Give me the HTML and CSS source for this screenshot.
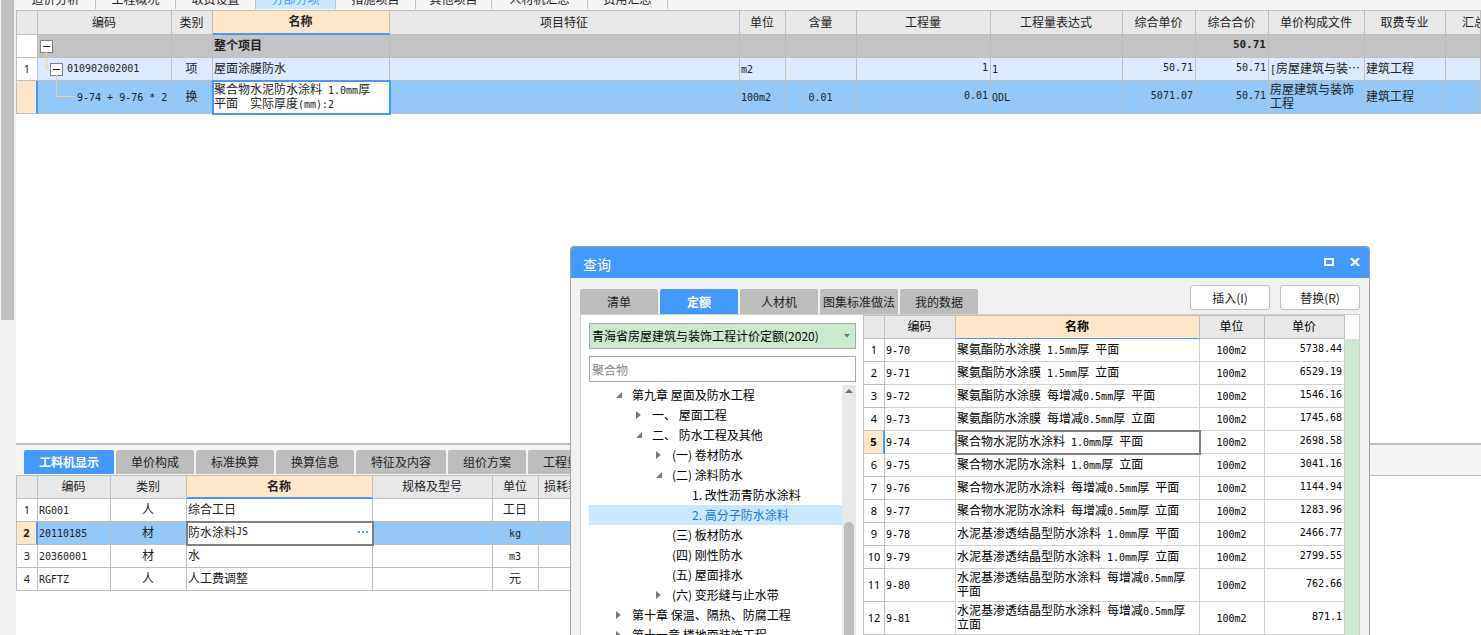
FILE: index.html
```html
<!DOCTYPE html>
<html lang="zh-CN">
<head>
<meta charset="utf-8">
<title>分部分项</title>
<link rel="stylesheet" href="styles.css">
</head>
<body>
<div class="app">
  <aside class="rail"><div class="rail-thumb"></div></aside>
  <main class="main">
    <nav class="page-tabs">
      <button>造价分析</button><button>工程概况</button><button>取费设置</button><button class="active">分部分项</button><button>措施项目</button><button class="narrow">其他项目</button><button class="wide">人材机汇总</button><button>费用汇总</button>
    </nav>
    <section class="bill">
      <table class="grid">
        <colgroup><col class="w22"><col class="w134"><col class="w41"><col class="w177"><col><col class="w46"><col class="w71"><col class="w134"><col class="w132"><col class="w73"><col class="w73"><col class="w96"><col class="w81"><col class="w35"></colgroup>
        <thead>
          <tr class="bill-head"><th></th><th>编码</th><th>类别</th><th class="current">名称</th><th>项目特征</th><th>单位</th><th>含量</th><th>工程量</th><th>工程量表达式</th><th>综合单价</th><th>综合合价</th><th>单价构成文件</th><th>取费专业</th><th class="cut">汇总类别</th></tr>
        </thead>
        <tbody>
          <tr class="total"><td class="idx"></td><td class="code"><button class="toggle" aria-label="折叠"></button></td><td></td><td class="strong">整个项目</td><td></td><td></td><td></td><td></td><td></td><td></td><td class="num strong">50.71</td><td></td><td></td><td></td></tr>
          <tr class="item"><td class="idx">1</td><td class="code lv1"><span class="branch"></span><button class="toggle" aria-label="折叠"></button><span class="n">010902002001</span></td><td class="mid">项</td><td>屋面涂膜防水</td><td></td><td><span class="n">m2</span></td><td></td><td class="num">1</td><td><span class="n">1</span></td><td class="num">50.71</td><td class="num">50.71</td><td class="file"><span class="n">[</span>房屋建筑与装…</td><td>建筑工程</td><td></td></tr>
          <tr class="tall picked"><td class="idx on"></td><td class="code lv2"><span class="branch"></span><span class="n">9-74 + 9-76 * 2</span></td><td class="mid">换</td><td class="edit">聚合物水泥防水涂料<span class="n"> 1.0mm</span>厚<br>平面　实际厚度<span class="n">(mm):2</span></td><td></td><td><span class="n">100m2</span></td><td class="mid"><span class="n">0.01</span></td><td class="num">0.01</td><td><span class="n">QDL</span></td><td class="num">5071.07</td><td class="num">50.71</td><td>房屋建筑与装饰工程</td><td>建筑工程</td><td></td></tr>
        </tbody>
      </table>
    </section>
    <section class="detail">
      <nav class="tabs detail-tabs">
        <button class="active long">工料机显示</button><button>单价构成</button><button>标准换算</button><button>换算信息</button><button class="long">特征及内容</button><button>组价方案</button><button class="long">工程量明细</button>
      </nav>
      <div class="detail-body">
        <table class="grid res">
          <colgroup><col class="w22"><col class="w73"><col class="w76"><col class="w186"><col class="w120"><col class="w46"><col class="w46"></colgroup>
          <thead><tr><th></th><th>编码</th><th>类别</th><th class="current">名称</th><th>规格及型号</th><th>单位</th><th class="cut5">损耗率</th></tr></thead>
          <tbody>
            <tr><td class="idx">1</td><td><span class="n">RG001</span></td><td class="mid">人</td><td>综合工日</td><td></td><td class="mid">工日</td><td></td></tr>
            <tr class="picked"><td class="idx on">2</td><td><span class="n">20110185</span></td><td class="mid">材</td><td class="focus"><div class="with-more">防水涂料<span class="n">JS</span><button class="more" aria-label="更多"><i></i><i></i><i></i></button></div></td><td></td><td class="mid"><span class="n">kg</span></td><td></td></tr>
            <tr><td class="idx">3</td><td><span class="n">20360001</span></td><td class="mid">材</td><td>水</td><td></td><td class="mid"><span class="n">m3</span></td><td></td></tr>
            <tr><td class="idx">4</td><td><span class="n">RGFTZ</span></td><td class="mid">人</td><td>人工费调整</td><td></td><td class="mid">元</td><td></td></tr>
          </tbody>
        </table>
      </div>
    </section>
  </main>
</div>

<div class="dialog" role="dialog" aria-labelledby="dlg-title">
  <header class="titlebar">
    <h1 id="dlg-title">查询</h1>
    <button aria-label="最大化"><svg width="10" height="8" viewBox="0 0 10 8"><path d="M1 1h8v6H1z" fill="none" stroke="#fff" stroke-width="2"/></svg></button>
    <button aria-label="关闭"><svg width="10" height="8" viewBox="0 0 10 8"><path d="M1 0l8 8M9 0L1 8" stroke="#fff" stroke-width="2.4"/></svg></button>
  </header>
  <div class="toolbar">
    <nav class="tabs">
      <button>清单</button><button class="active">定额</button><button>人材机</button><button>图集标准做法</button><button>我的数据</button>
    </nav>
    <div class="actions"><button>插入(I)</button><button>替换(R)</button></div>
  </div>
  <div class="panes">
    <div class="finder">
      <div class="combo">
        <select aria-label="定额库"><option>青海省房屋建筑与装饰工程计价定额(2020)</option></select>
        <svg width="6" height="4" viewBox="0 0 6 4"><path d="M0 0h6L3 3.5z" fill="#777"/></svg>
      </div>
      <input class="search" type="text" placeholder="聚合物" aria-label="搜索">
      <div class="tree-wrap">
        <ul class="tree">
          <li class="open">第九章 屋面及防水工程</li>
          <li class="d1 closed">一、 屋面工程</li>
          <li class="d1 open">二、 防水工程及其他</li>
          <li class="d2 closed">(一) 卷材防水</li>
          <li class="d2 open">(二) 涂料防水</li>
          <li class="d3">1. 改性沥青防水涂料</li>
          <li class="d3 sel">2. 高分子防水涂料</li>
          <li class="d2">(三) 板材防水</li>
          <li class="d2">(四) 刚性防水</li>
          <li class="d2">(五) 屋面排水</li>
          <li class="d2 closed">(六) 变形缝与止水带</li>
          <li class="closed">第十章 保温、隔热、防腐工程</li>
          <li class="closed">第十一章 楼地面装饰工程</li>
        </ul>
        <div class="scroll"><svg width="8" height="4" viewBox="0 0 8 4"><path d="M4 0l4 4H0z" fill="#707078"/></svg><div class="scroll-thumb"></div></div>
      </div>
    </div>
    <div class="quota">
      <table class="grid light">
        <colgroup><col class="w22"><col class="w71"><col><col class="w65"><col class="w80"></colgroup>
        <thead><tr><th></th><th>编码</th><th class="current thin">名称</th><th>单位</th><th>单价</th></tr></thead>
        <tbody>
          <tr><td class="idx">1</td><td><span class="n">9-70</span></td><td>聚氨酯防水涂膜<span class="n"> 1.5mm</span>厚<span class="n"> </span>平面</td><td class="mid"><span class="n">100m2</span></td><td class="num">5738.44</td></tr>
          <tr><td class="idx">2</td><td><span class="n">9-71</span></td><td>聚氨酯防水涂膜<span class="n"> 1.5mm</span>厚<span class="n"> </span>立面</td><td class="mid"><span class="n">100m2</span></td><td class="num">6529.19</td></tr>
          <tr><td class="idx">3</td><td><span class="n">9-72</span></td><td>聚氨酯防水涂膜<span class="n"> </span>每增减<span class="n">0.5mm</span>厚<span class="n"> </span>平面</td><td class="mid"><span class="n">100m2</span></td><td class="num">1546.16</td></tr>
          <tr><td class="idx">4</td><td><span class="n">9-73</span></td><td>聚氨酯防水涂膜<span class="n"> </span>每增减<span class="n">0.5mm</span>厚<span class="n"> </span>立面</td><td class="mid"><span class="n">100m2</span></td><td class="num">1745.68</td></tr>
          <tr><td class="idx on">5</td><td><span class="n">9-74</span></td><td class="focus">聚合物水泥防水涂料<span class="n"> 1.0mm</span>厚<span class="n"> </span>平面</td><td class="mid"><span class="n">100m2</span></td><td class="num">2698.58</td></tr>
          <tr><td class="idx">6</td><td><span class="n">9-75</span></td><td>聚合物水泥防水涂料<span class="n"> 1.0mm</span>厚<span class="n"> </span>立面</td><td class="mid"><span class="n">100m2</span></td><td class="num">3041.16</td></tr>
          <tr><td class="idx">7</td><td><span class="n">9-76</span></td><td>聚合物水泥防水涂料<span class="n"> </span>每增减<span class="n">0.5mm</span>厚<span class="n"> </span>平面</td><td class="mid"><span class="n">100m2</span></td><td class="num">1144.94</td></tr>
          <tr><td class="idx">8</td><td><span class="n">9-77</span></td><td>聚合物水泥防水涂料<span class="n"> </span>每增减<span class="n">0.5mm</span>厚<span class="n"> </span>立面</td><td class="mid"><span class="n">100m2</span></td><td class="num">1283.96</td></tr>
          <tr><td class="idx">9</td><td><span class="n">9-78</span></td><td>水泥基渗透结晶型防水涂料<span class="n"> 1.0mm</span>厚<span class="n"> </span>平面</td><td class="mid"><span class="n">100m2</span></td><td class="num">2466.77</td></tr>
          <tr><td class="idx">10</td><td><span class="n">9-79</span></td><td>水泥基渗透结晶型防水涂料<span class="n"> 1.0mm</span>厚<span class="n"> </span>立面</td><td class="mid"><span class="n">100m2</span></td><td class="num">2799.55</td></tr>
          <tr class="tall"><td class="idx">11</td><td><span class="n">9-80</span></td><td>水泥基渗透结晶型防水涂料<span class="n"> </span>每增减<span class="n">0.5mm</span>厚<br>平面</td><td class="mid"><span class="n">100m2</span></td><td class="num">762.66</td></tr>
          <tr class="tall"><td class="idx">12</td><td><span class="n">9-81</span></td><td>水泥基渗透结晶型防水涂料<span class="n"> </span>每增减<span class="n">0.5mm</span>厚<br>立面</td><td class="mid"><span class="n">100m2</span></td><td class="num">871.1</td></tr>
        </tbody>
      </table>
      <div class="gutter"></div>
    </div>
  </div>
</div>
</body>
</html>
```
FILE: styles.css
```css
* { box-sizing: border-box; }

body {
  margin: 0;
  height: 100vh;
  overflow: hidden;
  position: relative;
  background: #fff;
  color: #222;
  font: 12px/14px "Noto Sans CJK SC", sans-serif;
}

button, select, input { font: inherit; color: inherit; }
button { margin: 0; padding: 0; border: 0; background: none; white-space: nowrap; }

.app { display: flex; height: 100%; }

.rail { width: 16px; flex: none; padding: 0 2px 0 1px; background: #f0f0f0; }
.rail-thumb { height: 320px; background: #c0c0c0; }

.main { flex: 1; min-width: 0; display: flex; flex-direction: column; }

/* page tabs, scrolled mostly out of view */
.page-tabs {
  flex: none;
  display: flex;
  align-items: flex-end;
  height: 10px;
  padding-bottom: 1px;
  overflow: hidden;
  background: #f5f5f5;
}
.page-tabs button {
  flex: none;
  width: 80px;
  height: 20px;
  border-right: 1px solid #c0c0c0;
}
.page-tabs .narrow { width: 76px; }
.page-tabs .wide { width: 96px; }
.page-tabs .active { background: #cce8ff; color: #49f; }

/* grids */
.grid {
  width: 100%;
  table-layout: fixed;
  border-collapse: separate;
  border-spacing: 0;
  border-top: 1px solid #bfbfbf;
}
.grid th, .grid td {
  height: 23px;
  padding: 0 2px 2px 1px;
  border-right: 1px solid #bfbfbf;
  border-bottom: 1px solid #bfbfbf;
  text-align: left;
  vertical-align: middle;
  font-weight: normal;
}
.grid th { background: #e8e8e8; text-align: center; white-space: nowrap; overflow: hidden; }
.grid th:first-child, .grid td:first-child { border-left: 1px solid #bfbfbf; }
.grid th.current { background: #ffe6c8; font-weight: bold; border-bottom: 2px solid #49f; }
.grid th.thin { border-bottom-width: 1px; }
.grid .bill-head th { height: 24px; }
.grid .tall td { height: 33px; }
.grid th.cut { padding-left: 16px; text-align: left; }
.grid th.cut5 { padding-left: 5px; text-align: left; }
.grid .mid { text-align: center; }
.grid td.idx { padding: 0; text-align: center; font-family: "Noto Sans", sans-serif; font-size: 11px; background: #fff; }
.grid td.idx.on { background: #ffe6c8; border-right: 2px solid #49f; font-weight: bold; }
.n, .grid td.num { font-family: "DejaVu Sans Mono", monospace; font-size: 10px; white-space: pre; }
.n { line-height: 1; }
.grid td.num { text-align: right; }
.grid td.strong { font-weight: bold; }
.grid td.num.strong { font-size: 11px; }
.grid .total td { background: #c4c4c4; border-right-color: #bbb; }
.grid .total td.idx { background: #fff; border-right-color: #bfbfbf; }
.grid .item td { background: #dde9ff; }
.grid .item td.idx { background: #fff; }
.grid .picked td { background: #93c8f8; }
.grid .picked td.idx { background: #ffe6c8; }
.grid td.file { white-space: nowrap; overflow: hidden; }
.grid .picked td.edit { background: #fff; outline: 2px solid #49f; outline-offset: -1px; }
.grid td.focus, .grid .picked td.focus { background: #fff; outline: 2px solid #808080; outline-offset: -1px; }
.light { color: #000; }
.light td { border-color: #d0d0d0; }
.grid.light td.idx { border-color: #bfbfbf; }
.grid.light td.idx.on { border-right-color: #49f; }

.w22 { width: 22px; }
.w35 { width: 35px; }
.w41 { width: 41px; }
.w46 { width: 46px; }
.w65 { width: 65px; }
.w71 { width: 71px; }
.w73 { width: 73px; }
.w76 { width: 76px; }
.w80 { width: 80px; }
.w81 { width: 81px; }
.w96 { width: 96px; }
.w120 { width: 120px; }
.w132 { width: 132px; }
.w134 { width: 134px; }
.w177 { width: 177px; }
.w186 { width: 186px; }

/* code column hierarchy */
.grid td.code { position: relative; white-space: nowrap; }
.toggle {
  width: 13px;
  height: 13px;
  margin: 0 4px 0 1px;
  display: inline-flex;
  align-items: center;
  justify-content: center;
  vertical-align: middle;
  border: 1px solid #808080;
  background: #fff;
}
.toggle::before { content: ""; width: 7px; height: 1px; background: #222; }
.grid td.lv1 { padding-left: 11px; }
.grid td.lv2 { padding-left: 39px; }
.branch { position: absolute; border: solid #fc8; border-width: 0 0 1px 1px; }
.lv1 .branch { left: 8px; top: -6px; width: 5px; height: 17px; }
.lv2 .branch { left: 18px; top: -6px; width: 18px; height: 22px; }

.bill { flex: 1; min-height: 0; overflow: hidden; }

/* detail panel */
.detail {
  flex: none;
  height: 192px;
  display: flex;
  flex-direction: column;
  border-top: 2px solid #bfbfbf;
  background: #f4f4f4;
}
.detail-tabs { padding: 5px 0 0 8px; }
.detail-body { flex: 1; margin-top: 1px; border-top: 1px solid #bfbfbf; background: #fff; }
.grid.res { width: 569px; border-top: 0; }

.tabs { display: flex; gap: 2px; }
.tabs button {
  flex: none;
  width: 78px;
  height: 24px;
  border-radius: 2px 2px 0 0;
  background: #bdbdbd;
  color: #222;
}
.tabs button.long { width: 90px; }
.tabs button.active { background: #49f; color: #fff; font-weight: bold; }

.with-more { display: flex; align-items: center; }
.more { display: flex; gap: 2px; margin-left: auto; padding: 6px 2px; }
.more i { width: 2px; height: 2px; background: #48a0d8; }

/* query window */
.dialog {
  position: absolute;
  left: 570px;
  top: 246px;
  bottom: 0;
  width: 800px;
  display: flex;
  flex-direction: column;
  overflow: hidden;
  border: 1px solid #a0a0a0;
  border-bottom: 0;
  border-radius: 4px 4px 0 0;
  background: #f1f1f1;
}
.titlebar {
  flex: none;
  display: flex;
  align-items: center;
  gap: 16px;
  height: 31px;
  padding: 0 9px 1px 12px;
  background: #49f;
  color: #fff;
}
.titlebar h1 { flex: 1; margin: 0; padding-top: 3px; font-size: 14px; line-height: 20px; font-weight: normal; }
.titlebar button { display: flex; }

.toolbar {
  flex: none;
  display: flex;
  justify-content: space-between;
  height: 36px;
  padding: 7px 9px 0;
}
.toolbar .tabs { padding-top: 4px; }
.toolbar .tabs button { height: 25px; }
.actions { display: flex; gap: 10px; }
.actions button {
  width: 80px;
  height: 25px;
  border: 1px solid #bfbfbf;
  border-radius: 3px;
  background: #fff;
}

.panes {
  flex: 1;
  min-height: 0;
  margin: 0 9px;
  display: flex;
  border: 1px solid #d0d0d0;
  border-bottom: 0;
  background: #fff;
  color: #000;
}
.finder { width: 282px; flex: none; padding: 8px 7px 0 8px; display: flex; flex-direction: column; }
.combo { position: relative; flex: none; height: 26px; }
.combo select {
  appearance: none;
  width: 100%;
  height: 100%;
  padding: 0 2px;
  border: 1px solid #a8a8a8;
  border-radius: 0;
  background: #cce8cf;
}
.combo svg { position: absolute; right: 6px; top: 11px; }
.search { flex: none; height: 26px; margin-top: 7px; padding: 0 2px; border: 1px solid #a8a8a8; }
.search::placeholder { color: #888; }

.tree-wrap { flex: 1; min-height: 0; margin-top: 3px; display: flex; overflow: hidden; }
.tree { flex: 1; margin: 0; padding: 0; list-style: none; }
.tree li {
  display: flex;
  align-items: center;
  height: 20px;
  padding-left: 27px;
  white-space: pre;
}
.tree li::before { content: ""; width: 6px; height: 8px; margin-right: 10px; }
.tree .closed::before { background: #777; clip-path: polygon(0 0, 80% 50%, 0 100%); }
.tree .open::before { height: 6px; background: #777; clip-path: polygon(100% 0, 100% 100%, 0 100%); }
.tree .d1 { padding-left: 47px; }
.tree .d2 { padding-left: 67px; }
.tree .d3 { padding-left: 87px; }
.tree .sel { background: #cce8ff; color: #1a73e8; }

.scroll {
  width: 14px;
  flex: none;
  display: flex;
  flex-direction: column;
  align-items: center;
  gap: 129px;
  padding-top: 4px;
  background: #e8e8e8;
}
.scroll svg { flex: none; }
.scroll-thumb { flex: 1; width: 10px; border-radius: 5px 5px 0 0; background: #bdbdbd; }

.quota { flex: 1; min-width: 0; display: flex; align-items: flex-start; overflow: hidden; }
.quota .grid { flex: 1; }
.gutter { width: 14px; flex: none; align-self: stretch; margin-top: 24px; background: #cce8cf; }
```
